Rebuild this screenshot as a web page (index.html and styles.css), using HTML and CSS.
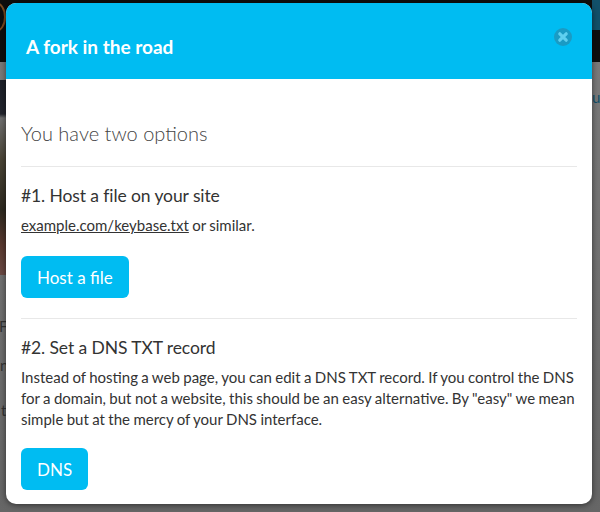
FILE: index.html
```html
<!DOCTYPE html>
<html lang="en">
<head>
<meta charset="utf-8">
<title>A fork in the road</title>
<link rel="stylesheet" href="styles.css">
</head>
<body>
<div class="backdrop">
  <div class="bg-top"></div>
  <div class="bg-rest"></div>
  <div class="bg-photo"></div>
  <div class="bg-arc"></div>
  <span class="bg-tab"></span>
  <span class="bg-word bg-word-f">Fi</span>
  <span class="bg-word bg-word-n">n</span>
  <span class="bg-word bg-word-t">t</span>
  <span class="bg-word bg-word-u">u</span>
</div>
<main class="modal">
  <header class="modal-header">
    <h1 class="modal-title">A fork in the road</h1>
    <svg class="close" viewBox="0 0 18 18" aria-label="Close">
      <circle cx="9" cy="9" r="9" fill="#1a9bc4"/>
      <path d="M5.8 5.8 12.2 12.2M12.2 5.8 5.8 12.2" stroke="#5fd0f0" stroke-width="3.2" stroke-linecap="round"/>
    </svg>
  </header>
  <div class="modal-body">
    <h2 class="lead">You have two options</h2>
    <hr class="rule">
    <h3 class="option-title">#1. Host a file on your site</h3>
    <p class="text"><a class="link" href="#">example.com/keybase.txt</a> or similar.</p>
    <button class="btn btn-first">Host a file</button>
    <hr class="rule rule-second">
    <h3 class="option-title">#2. Set a DNS TXT record</h3>
    <p class="text">Instead of hosting a web page, you can edit a DNS TXT record. If you control the DNS for a domain, but not a website, this should be an easy alternative. By "easy" we mean simple but at the mercy of your DNS interface.</p>
    <button class="btn btn-second">DNS</button>
  </div>
</main>
</body>
</html>
```
FILE: styles.css
```css
* { box-sizing: border-box; }
html, body { margin: 0; height: 512px; overflow: hidden; }
body {
  position: relative;
  width: 600px;
  padding: 3px 8px 0 6px;
  font-family: Lato, "Liberation Sans", sans-serif;
  color: #333;
  background: #6e6e6e;
}
.backdrop { position: absolute; inset: 0; overflow: hidden; display: flex; flex-direction: column; }
.bg-top { height: 62px; background: #0e0e0e; }
.bg-rest { flex: 1; background: linear-gradient(#7a7a7a, #6e6e6e 60%, #666); }
.bg-photo {
  position: absolute; left: 0; top: 80px; width: 6px; height: 195px;
  background: linear-gradient(#1c1f28 0, #23252e 34px, #6f6f6f 38px, #4a4436 80px, #2e2a20 130px, #5a3a30 165px, #6b4a44 195px);
}
.bg-arc {
  position: absolute; left: -14px; top: 2px; width: 20px; height: 30px;
  border: 2px solid #7a4a20; border-radius: 50%;
}
.bg-tab { position: absolute; left: 592px; top: 0; width: 8px; height: 30px; background: #12506a; }
.bg-word { position: absolute; font-size: 15px; line-height: 18px; color: #333; }
.bg-word-f { left: -1px; top: 317px; }
.bg-word-n { left: 0; top: 356px; }
.bg-word-t { left: 1px; top: 401px; }
.bg-word-u { left: 592px; top: 88px; color: #12506a; }
.modal {
  position: relative;
  width: 586px;
  height: 501px;
  background: #fff;
  border-radius: 10px;
  overflow: hidden;
  box-shadow: 0 1px 6px rgba(0,0,0,.55);
}
.modal-header {
  position: relative;
  height: 76px;
  padding: 10px 20px 0;
  display: flex;
  align-items: center;
  background: #00bcf2;
}
.modal-title { margin: 0; font-size: 19px; font-weight: 700; color: #fff; line-height: 1; }
.close { position: absolute; top: 25px; right: 20px; width: 18px; height: 18px; }
.modal-body { padding: 39px 15px 0 15px; }
.lead { margin: 0; font-size: 20px; font-weight: 300; line-height: 30px; color: #444; }
.rule { margin: 18px 0 0; border: 0; border-top: 1px solid #e8e8e8; }
.rule-second { margin-top: 20px; }
.option-title { margin: 19px 0 0; font-size: 17.5px; font-weight: 400; line-height: 20px; letter-spacing: -0.1px; color: #333; }
.text { margin: 9px 0 0; font-size: 15px; line-height: 21px; word-spacing: -0.45px; color: #333; }
.link { color: #333; }
.btn {
  display: block;
  height: 42px;
  padding: 0 16px;
  border: 0;
  border-radius: 6px;
  background: #00bcf2;
  color: #fff;
  font: 400 17px Lato, "Liberation Sans", sans-serif;
}
.btn-first { margin-top: 20px; }
.btn-second { margin-top: 18px; }
```
